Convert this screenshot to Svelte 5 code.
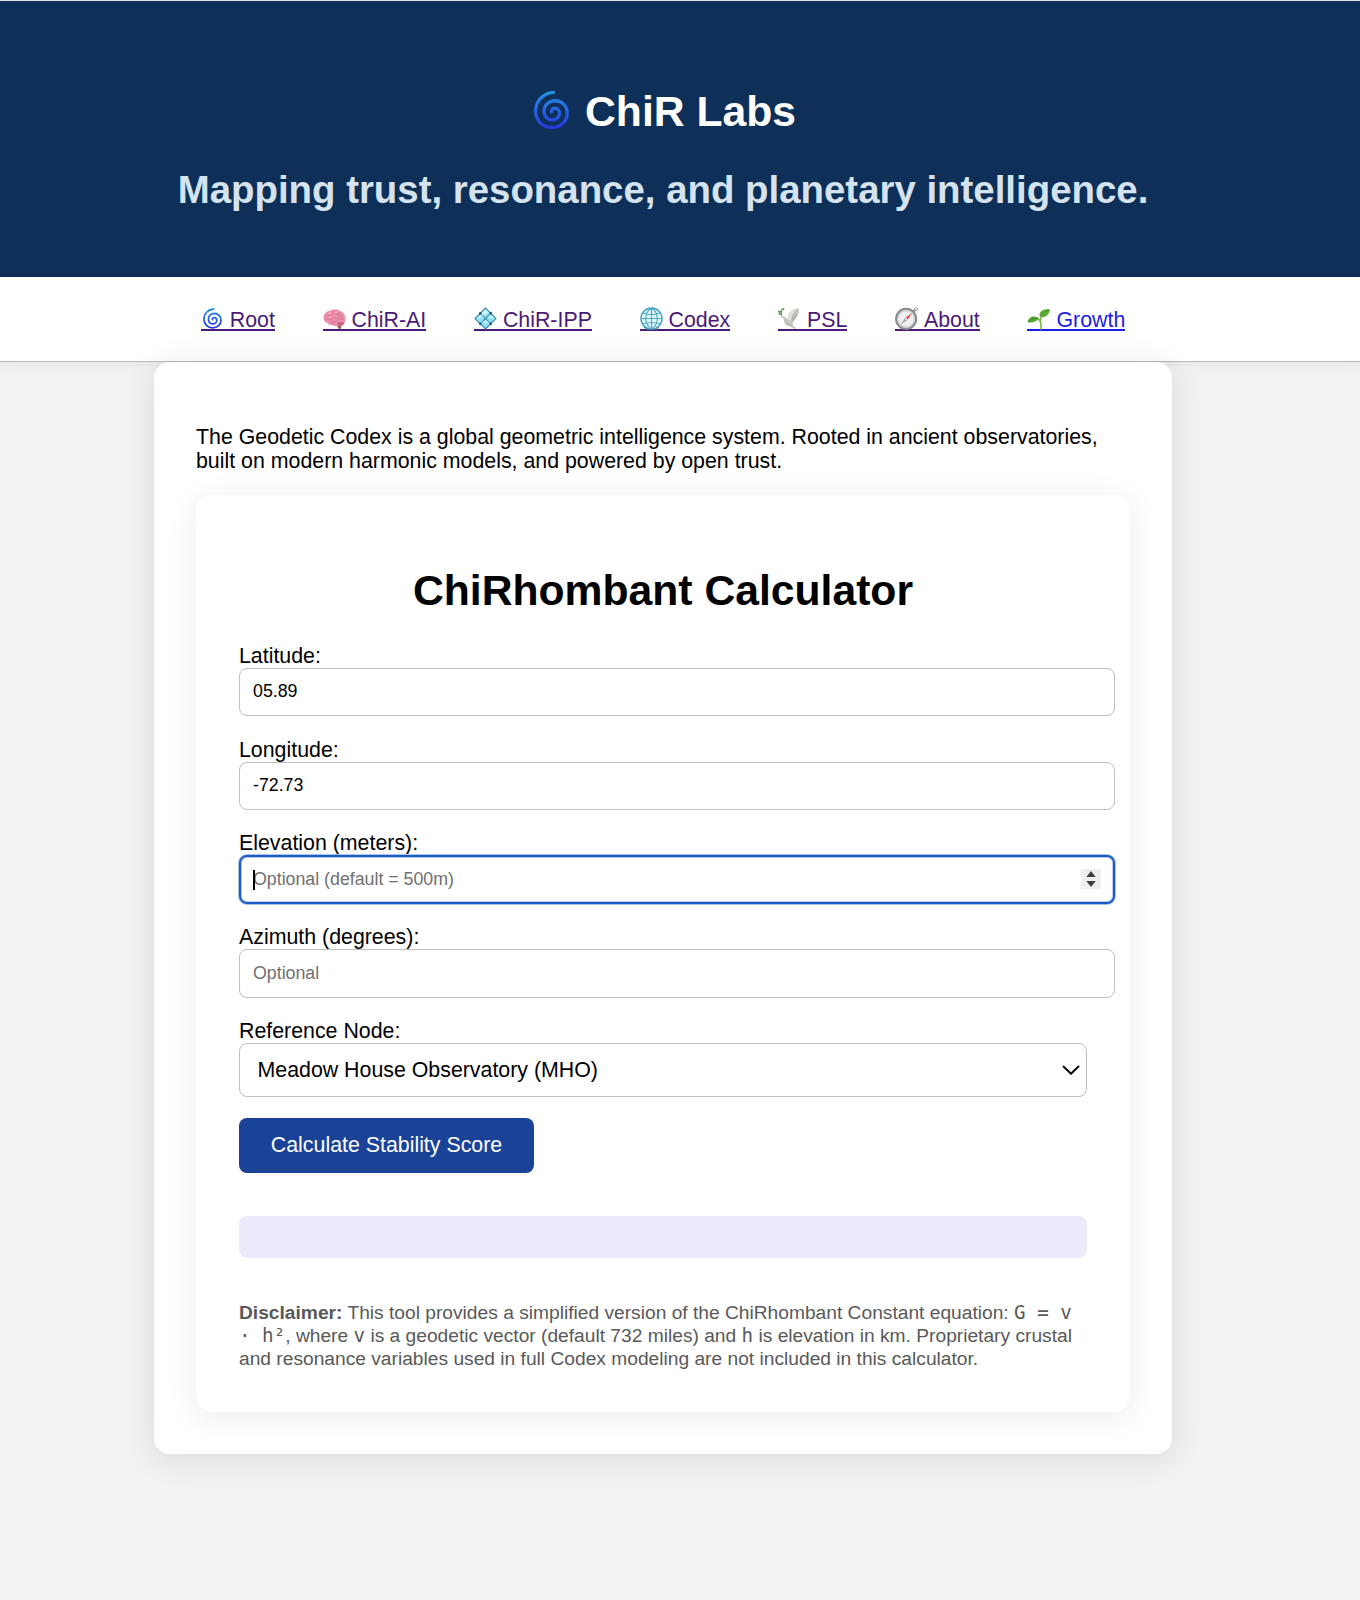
<script>
  const links = [
    { icon: 'spiral', label: 'Root' },
    { icon: 'brain', label: 'ChiR-AI' },
    { icon: 'diamond', label: 'ChiR-IPP' },
    { icon: 'globe', label: 'Codex' },
    { icon: 'dove', label: 'PSL' },
    { icon: 'compass', label: 'About' },
    { icon: 'sprout', label: 'Growth', fresh: true }
  ];
</script>

{#snippet spiral()}
  <svg class="icon swirl" viewBox="0 0 36 40" fill="none" stroke="url(#swirl)" stroke-width="3.4" stroke-linecap="round">
    <defs>
      <linearGradient id="swirl" x1="0" y1="0" x2="0" y2="40" gradientUnits="userSpaceOnUse">
        <stop offset="0" stop-color="#2596e0" />
        <stop offset="1" stop-color="#2433dc" />
      </linearGradient>
    </defs>
    <path d="M20 1.900C9 3 1.700 11 1.700 21C1.700 31 9 38 18.300 38C27.500 38 34.200 31.500 34.200 23.500C34.200 15.500 28.500 10.500 21.800 10.500C15 10.500 10.300 15.500 10.300 21.300C10.300 26.800 14 30.300 18.500 30.300C22.900 30.300 26.200 27.200 26.200 23.500C26.200 20.300 24 18.200 21.500 18.200C19 18.200 17.600 20 18 22" />
  </svg>
{/snippet}

{#snippet picture(name)}
  {#if name === 'spiral'}
    {@render spiral()}
  {:else if name === 'brain'}
    <svg class="icon" viewBox="0 0 24 24">
      <path d="M14 18l2 4.500c1 1 3 .5 3-1l.5-4z" fill="#a9605a" />
      <path d="M.8 13C-.2 7.500 3 4.500 7 3.800C10 2 15 2.300 17.500 4C21.500 5.200 24 9.500 23.400 13.500C23 17 21 18.800 18 18.600C15 20.800 11.500 20 10 18.800C7.500 19.500 5 18 4.500 16.500C2.500 16 1.400 15 .8 13z" fill="#ed8fab" />
      <path d="M14.500 16.500c3-1.500 6-1 8 0c-1 3-4.500 4-7 3z" fill="#c9667f" />
      <path d="M3 9c2-2 4 1 6-1s-1-3 2-4M3 13c3-2 4 2 7-1s3 1 6-1s-1-4 1-6M7 16c3-2 5 1 8-2s4 0 7-2M12 8c2-1 3 1 5-1m2 1c1 2-1 3 0 4M10 14c1 1 0 3 2 4" fill="none" stroke="#cc6484" stroke-width=".6" />
      <path d="M5 7c2-1 3-1 4-2m4 1l2-1M6 11l2-.5" fill="none" stroke="#ffc3d2" stroke-width="1" />
    </svg>
  {:else if name === 'diamond'}
    <svg class="icon" viewBox="0 0 24 24">
      <path d="M12 .3L23.700 12L12 23.700L.3 12z" fill="#2f7da8" />
      <g fill="#8fe0f5">
        <path d="M12 1.700L17 6.700L12 11.300L7 6.700z" /><path d="M12 12.700L17 17.300L12 22.300L7 17.300z" />
        <path d="M1.700 12L6.700 7L11.300 12L6.700 17z" /><path d="M12.700 12L17.300 7L22.300 12L17.300 17z" />
      </g>
      <g fill="#c9f5fd"><path d="M12 2l3.500 3.800-6 3L7.500 6.700z" /><path d="M7 8l2.500 2.500L3 12z" /><path d="M17.300 8l3.500 3.500-6 .5z" /><path d="M12 13.500l3 3-5 1z" /></g>
      <g fill="#174b82"><circle cx="6.500" cy="6.500" r="1.300" /><circle cx="17.500" cy="6.500" r="1.300" /><circle cx="6.500" cy="17.500" r="1.300" /><circle cx="17.500" cy="17.500" r="1.300" /></g>
      <circle cx="12" cy="12" r="1" fill="#7d9b9b" />
    </svg>
  {:else if name === 'globe'}
    <svg class="icon" viewBox="0 0 24 24">
      <circle cx="12" cy="12" r="11" fill="#e4f7fb" stroke="#45a5c4" stroke-width="1.500" />
      <path d="M12 1v22M1 12h22M3 6.300c5 1.700 13 1.700 18 0M3 17.700c5-1.700 13-1.700 18 0M12 1c-8 5-8 17 0 22c8-5 8-17 0-22" fill="none" stroke="#4baac9" stroke-width="1.200" />
      <path d="M4 21a11 11 0 0 0 16 0" fill="none" stroke="#4b8c86" stroke-width="1" />
    </svg>
  {:else if name === 'dove'}
    <svg class="icon" viewBox="0 0 24 24">
      <path d="M3.500 9.500C6 9 8 10 9 12L11 13C8.500 8 13 2.500 21.500 1C22.500 6 20 12 15.500 15.500C16 17 15.500 18 15 18.800L19 22L17 23L12.500 20.300C8 20.300 6.500 17 6 12.500C5 11 4 11 2.500 11.500z" fill="#cbc8c3" />
      <path d="M11 13C9.500 8 13 2.500 21.500 1C17 4 14 8 13.500 14z" fill="#e2dfdb" />
      <path d="M21 3c-3 2-6 6-6.500 11M21 6c-2 2-5 5-6 9M20 9c-2 2-3 3-5 6M7 13c1 3 3 5 8 6" fill="none" stroke="#a4a09a" stroke-width=".7" />
      <path d="M3.800 9.500C3 6.500 2.800 4 4.500 1.500M.5 4l3 1-2.500 1zM4.500 3l1.500-2v2zM1 8l2.500-.5L2 6.500z" fill="#5c9850" stroke="#5c9850" stroke-width=".8" />
    </svg>
  {:else if name === 'compass'}
    <svg class="icon" viewBox="0 0 24 24">
      <circle cx="22" cy="2.200" r="1.600" fill="none" stroke="#9a9fa3" stroke-width="1" />
      <path d="M19 5l2-2" stroke="#85898d" stroke-width="2" />
      <circle cx="11.600" cy="12.400" r="10.500" fill="#eef0f1" stroke="#858a8f" stroke-width="2" />
      <circle cx="11.600" cy="12.400" r="8.700" fill="none" stroke="#c6cacc" stroke-width="1.300" />
      <path d="M18 6L12.800 13.300L10.900 11.500z" fill="#ee3030" />
      <path d="M5.500 19L10.600 11.300L12.900 13.500z" fill="#a3a7aa" />
      <circle cx="11.700" cy="12.400" r=".9" fill="#fff" />
    </svg>
  {:else}
    <svg class="icon" viewBox="0 0 24 24">
      <path d="M14.500 23C15.500 17 13.500 12 9.500 11.500M14 15C14 11 15 9 18 6" fill="none" stroke="#7fba43" stroke-width="1.700" stroke-linecap="round" />
      <path d="M.5 16C2 9.500 7 8.500 12 11.500C10 16 5 16.500 .5 16z" fill="#58a832" />
      <path d="M13 9C13 3.500 18 2 24 2.500C23 8.500 19 11.500 14 10.300z" fill="#5fae36" />
      <path d="M1 15.500C5 12 8 11.300 11.500 11.500M14 9.500C17 6 20 4.500 23 3" fill="none" stroke="#36862a" stroke-width=".9" />
    </svg>
  {/if}
{/snippet}

<div class="page">
  <header>
    <h1>{@render spiral()}<span>ChiR Labs</span></h1>
    <p class="tagline">Mapping trust, resonance, and planetary intelligence.</p>
  </header>

  <nav>
    {#each links as link}
      <a href="#top" class:fresh={link.fresh}>{@render picture(link.icon)}<span>{link.label}</span></a>
    {/each}
  </nav>

  <main>
    <p class="intro">
      The Geodetic Codex is a global geometric intelligence system. Rooted in ancient observatories,<br />
      built on modern harmonic models, and powered by open trust.
    </p>

    <section>
      <h2>ChiRhombant Calculator</h2>
      <div class="field spaced">
        <label for="lat">Latitude:</label>
        <input id="lat" value="05.89" />
      </div>
      <div class="field">
        <label for="lon">Longitude:</label>
        <input id="lon" value="-72.73" />
      </div>
      <div class="field">
        <label for="elev">Elevation (meters):</label>
        <div class="control">
          <input id="elev" class="tall active" placeholder="Optional (default = 500m)" />
          <span class="caret"></span>
          <svg class="stepper" viewBox="0 0 20 20">
            <rect width="20" height="20" fill="#efefef" />
            <path d="M10 2l4.700 6H5.300zM10 18l4.700-6H5.300z" fill="#404040" />
          </svg>
        </div>
      </div>
      <div class="field">
        <label for="az">Azimuth (degrees):</label>
        <input id="az" class="tall" placeholder="Optional" />
      </div>
      <div class="field">
        <label for="node">Reference Node:</label>
        <div class="control">
          <select id="node"><option>Meadow House Observatory (MHO)</option></select>
          <svg class="chevron" viewBox="0 0 18 10"><path d="M1 1l8 7.800L17 1" fill="none" stroke="#000" stroke-width="1.900" /></svg>
        </div>
      </div>
      <button>Calculate Stability Score</button>
      <div class="result"></div>
      <p class="disclaimer">
        <span><strong>Disclaimer:</strong> This tool provides a simplified version of the ChiRhombant Constant equation: <code>G = v</code></span>
        <span><code>· h²</code>, where <code>v</code> is a geodetic vector (default 732 miles) and <code>h</code> is elevation in km. Proprietary crustal</span>
        <span>and resonance variables used in full Codex modeling are not included in this calculator.</span>
      </p>
    </section>
  </main>
</div>

<style>
  :global(body) { margin: 0; background: #f2f2f2; }
  .page {
    min-height: 1600px;
    box-sizing: border-box;
    border-top: 1px solid #dfe3e8;
    font-family: "Liberation Sans", Arial, sans-serif;
    font-size: 21.350px;
    line-height: 24px;
    color: #000;
    background: #f2f2f2;
    overflow: hidden;
  }
  header {
    height: 276px;
    box-sizing: border-box;
    padding: 83px 34px 0 0;
    background: #0e2f57;
    text-align: center;
  }
  h1, h2, p { margin: 0; }
  h1 {
    display: flex;
    justify-content: center;
    align-items: flex-start;
    gap: 16px;
    padding-left: 4px;
    font-size: 42.670px;
    line-height: 55px;
    color: #fff;
  }
  h1 .icon { width: 35px; height: 40px; margin-top: 6px; }
  .tagline {
    margin-top: 26px;
    font-size: 38.400px;
    font-weight: bold;
    line-height: 49px;
    color: #d5e3ef;
    white-space: nowrap;
  }
  nav {
    height: 85px;
    box-sizing: border-box;
    padding: 31px 34px 0 0;
    display: flex;
    justify-content: center;
    gap: 47.700px;
    background: #fff;
    border-bottom: 1px solid #b8b8b8;
    box-shadow: 0 3px 10px rgba(0, 0, 0, 0.05);
  }
  a {
    display: flex;
    height: 24px;
    gap: 6px;
    color: #4b1a78;
    text-decoration: none;
    background: linear-gradient(currentColor, currentColor) 0 21px / 100% 2px no-repeat;
  }
  a.fresh { color: #1d1de0; }
  a .icon { width: 23px; height: 23px; margin-top: -1px; }
  a .swirl { height: 21px; margin-top: 0; }
  main {
    width: 1018px;
    height: 1092px;
    box-sizing: border-box;
    margin-left: 154px;
    padding: 63px 42px 0;
    background: #fff;
    border-radius: 16px;
    box-shadow: 0 4px 32px rgba(0, 0, 0, 0.1);
  }
  .intro { white-space: nowrap; }
  section {
    height: 917px;
    box-sizing: border-box;
    margin-top: 22px;
    padding: 70px 43px 0;
    border-radius: 16px;
    background: #fff;
    box-shadow: 0 5px 32px rgba(0, 0, 0, 0.08);
  }
  h2 {
    font-size: 42.670px;
    line-height: 50px;
    text-align: center;
    white-space: nowrap;
  }
  .field { margin-bottom: 21px; }
  .field.spaced { margin: 29px 0 22px; }
  label { display: block; }
  .control { position: relative; }
  input {
    display: block;
    width: 876px;
    height: 48px;
    box-sizing: border-box;
    padding: 0 13px 2px;
    font-family: inherit;
    font-size: 17.780px;
    color: #000;
    background: #fff;
    border: 1px solid #bfbfbf;
    border-radius: 8px;
  }
  input::placeholder { color: #707070; opacity: 1; }
  input.tall { height: 49px; padding-bottom: 1px; }
  input.active {
    padding: 0 12px 1px;
    border: 2px solid #1a5bc4;
    box-shadow: 0 0 0 1px #a9c3ea, inset 0 0 0 1px #b9cdec;
  }
  .caret {
    position: absolute;
    left: 14px;
    top: 15px;
    width: 2px;
    height: 20px;
    background: #000;
  }
  .stepper { position: absolute; left: 842px; top: 14px; width: 20px; height: 20px; }
  select {
    appearance: none;
    display: block;
    width: 848px;
    height: 54px;
    box-sizing: border-box;
    padding: 0 17.500px;
    font: inherit;
    color: #000;
    background: #fff;
    border: 1px solid #bfbfbf;
    border-radius: 8px;
  }
  .chevron { position: absolute; left: 823px; top: 22px; width: 18px; height: 10px; }
  button {
    display: block;
    width: 295px;
    height: 55px;
    padding: 0 0 2px;
    font: inherit;
    color: #fff;
    background: #1a4398;
    border: 0;
    border-radius: 8px;
  }
  .result {
    height: 42px;
    margin-top: 43px;
    border-radius: 8px;
    background: #ecebfb;
  }
  .disclaimer {
    margin-top: 43px;
    font-size: 19.210px;
    line-height: 23px;
    color: #595959;
    white-space: nowrap;
  }
  .disclaimer span { display: block; height: 23px; }
  code { font-family: "DejaVu Sans Mono", monospace; font-size: 19.200px; line-height: 1; }
</style>
